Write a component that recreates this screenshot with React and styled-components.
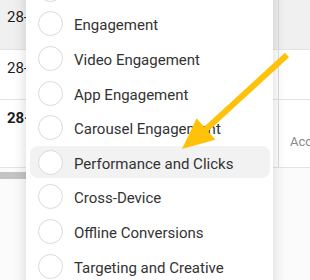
import React from "react";
import styled, { createGlobalStyle } from "styled-components";

// first entry is scrolled above the top of the list, only its radio shows
const options = [
  "",
  "Engagement",
  "Video Engagement",
  "App Engagement",
  "Carousel Engagement",
  "Performance and Clicks",
  "Cross-Device",
  "Offline Conversions",
  "Targeting and Creative",
];

const rows = [
  { date: "28-", height: 50, shaded: true },
  { date: "28-", height: 50 },
  { date: "28-", height: 68, bold: true, extra: "Acc" },
];

const GlobalStyle = createGlobalStyle`
  html, body {
    margin: 0;
    padding: 0;
    background: #ffffff;
    overflow: hidden;
  }
  body {
    font-family: Roboto, "Liberation Sans", Arial, sans-serif;
  }
`;

const App = () => {
  return (
    <Page>
      <GlobalStyle />
      <Table>
        {rows.map((row, i) => (
          <Row key={i} $height={row.height} $shaded={row.shaded}>
            <DateCell $bold={row.bold} $first={i === 0}>
              {row.date}
            </DateCell>
            <SideCell>{row.extra && <SideText>{row.extra}</SideText>}</SideCell>
          </Row>
        ))}
      </Table>
      <Scrollbar />

      <Menu>
        {options.map((label, i) => (
          <Option key={i} $active={label === "Performance and Clicks"}>
            <Radio />
            {label && <OptionLabel>{label}</OptionLabel>}
          </Option>
        ))}
      </Menu>

      <Arrow viewBox="0 0 310 280" width="310" height="280">
        <line
          x1="287"
          y1="55"
          x2="204"
          y2="131"
          stroke="#FFC20A"
          strokeWidth="6"
        />
        <polygon points="182,149 196.6,118.3 215.4,139.7" fill="#FFC20A" />
      </Arrow>
    </Page>
  );
};

export default App;

const Page = styled.div`
  position: relative;
  width: 310px;
  height: 280px;
  overflow: hidden;
  background: #fbfbfb;
`;

const Table = styled.div`
  display: flex;
  flex-direction: column;
  background: #ffffff;
`;

const Row = styled.div`
  display: grid;
  grid-template-columns: 278px 1fr;
  height: ${(p) => p.$height}px;
  box-sizing: border-box;
  border-bottom: 1px solid #e3e3e3;
  background: ${(p) => (p.$shaded ? "#f0f0f0" : "#ffffff")};
`;

const DateCell = styled.div`
  padding: ${(p) => (p.$first ? "8px" : "9px")} 0 0 7px;
  font-size: 15px;
  font-weight: ${(p) => (p.$bold ? 700 : 400)};
  color: #1d1d1d;
`;

const SideCell = styled.div`
  border-left: 1px solid #dcdcdc;
  padding: 31px 0 0 11px;
`;

const SideText = styled.span`
  font-size: 13px;
  color: #8a8a8a;
`;

const Scrollbar = styled.div`
  width: 200px;
  height: 7px;
  margin-top: 4px;
  background: #c4c4c4;
`;

const Menu = styled.div`
  position: absolute;
  left: 26px;
  top: -28px;
  width: 247px;
  height: 340px;
  background: #ffffff;
  border-radius: 6px;
  box-shadow: 0 2px 14px rgba(0, 0, 0, 0.16);
  display: flex;
  flex-direction: column;
`;

const Option = styled.div`
  display: flex;
  align-items: center;
  gap: 11px;
  height: 32px;
  margin: 1.3px 3px 1.3px 4px;
  padding-left: 8px;
  border-radius: 8px;
  background: ${(p) => (p.$active ? "#f2f2f2" : "transparent")};
`;

const Radio = styled.span`
  flex: none;
  width: 25px;
  height: 25px;
  box-sizing: border-box;
  border-radius: 50%;
  border: 1px solid #dadada;
  background: #ffffff;
`;

const OptionLabel = styled.span`
  font-size: 15px;
  color: #333333;
  white-space: nowrap;
  padding-top: 3px;
`;

const Arrow = styled.svg`
  position: absolute;
  left: 0;
  top: 0;
  pointer-events: none;
`;
